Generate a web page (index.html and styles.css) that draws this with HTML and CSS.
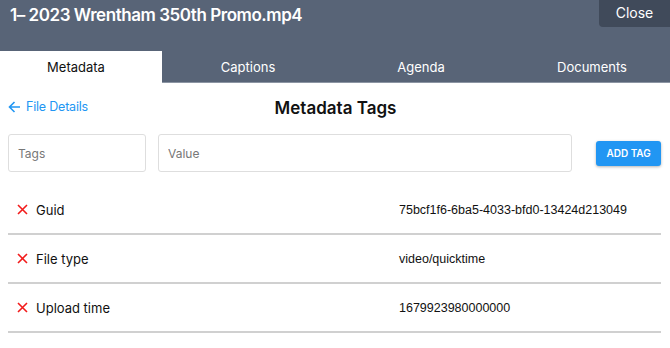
FILE: index.html
```html
<!DOCTYPE html>
<html lang="en">
<head>
    <meta charset="UTF-8">
    <meta name="viewport" content="width=device-width, initial-scale=1.0">
    <title>Metadata Tags</title>
    <link rel="stylesheet" href="styles.css">
</head>
<body>
    <div class="header">
        <div class="title-bar">
            <h1 class="title">1– 2023 Wrentham 350th Promo.mp4</h1>
            <button class="close-button">Close</button>
        </div>
        <div class="tabs">
            <div class="tab active">Metadata</div>
            <div class="tab tab-captions">Captions</div>
            <div class="tab tab-agenda">Agenda</div>
            <div class="tab tab-documents">Documents</div>
        </div>
    </div>

    <div class="content">
        <div class="toolbar">
            <a class="back-link" href="#">
                <svg width="13" height="12" viewBox="0 0 13 12"><path d="M12 6H1.5M6.5 1L1.5 6l5 5" fill="none" stroke="#2196f3" stroke-width="1.6"/></svg>
                File Details
            </a>
            <h2 class="section-title">Metadata Tags</h2>
        </div>

        <div class="tag-form">
            <input class="field field-tag" type="text" placeholder="Tags">
            <input class="field field-value" type="text" placeholder="Value">
            <button class="add-button">ADD TAG</button>
        </div>

        <div class="tag-list">
            <div class="tag-row">
                <div class="tag-name">
                    <svg class="remove" width="11" height="11" viewBox="0 0 11 11"><path d="M1 1l9 9M10 1l-9 9" stroke="#f21b1b" stroke-width="1.6"/></svg>
                    Guid
                </div>
                <div class="tag-value">75bcf1f6-6ba5-4033-bfd0-13424d213049</div>
            </div>
            <div class="tag-row">
                <div class="tag-name">
                    <svg class="remove" width="11" height="11" viewBox="0 0 11 11"><path d="M1 1l9 9M10 1l-9 9" stroke="#f21b1b" stroke-width="1.6"/></svg>
                    File type
                </div>
                <div class="tag-value">video/quicktime</div>
            </div>
            <div class="tag-row">
                <div class="tag-name">
                    <svg class="remove" width="11" height="11" viewBox="0 0 11 11"><path d="M1 1l9 9M10 1l-9 9" stroke="#f21b1b" stroke-width="1.6"/></svg>
                    Upload time
                </div>
                <div class="tag-value">1679923980000000</div>
            </div>
        </div>
    </div>
</body>
</html>
```

FILE: styles.css
```css
body {
    margin: 0;
    font-family: "Inter", "Noto Sans", sans-serif;
    color: #111;
    background: #fff;
}
.header {
    background-color: #586477;
}
.title-bar {
    display: flex;
    justify-content: space-between;
    align-items: flex-start;
    height: 51px;
}
.title {
    margin: 0;
    padding: 5px 0 0 10px;
    font-size: 17px;
    font-weight: 600;
    color: #fff;
    letter-spacing: -0.45px;
}
.close-button {
    width: 71px;
    height: 27px;
    border: none;
    border-bottom-left-radius: 4px;
    background-color: #404a5a;
    color: #fff;
    font-family: inherit;
    font-size: 14px;
    padding: 0 0 2px;
}
.tabs {
    display: flex;
    height: 31px;
    border-bottom: 1px solid #8c95a3;
}
.tab {
    display: flex;
    align-items: center;
    justify-content: center;
    font-size: 13px;
    color: #fff;
}
.tab.active {
    width: 162px;
    padding-right: 10px;
    box-sizing: border-box;
    background-color: #fff;
    color: #111;
    border-bottom: 1px solid #fff;
    margin-bottom: -1px;
}
.tab-captions {
    width: 172px;
}
.tab-agenda {
    width: 174px;
}
.tab-documents {
    flex: 1;
    padding-left: 6px;
}
.content {
    padding: 0 9px 0 8px;
}
.toolbar {
    position: relative;
    display: flex;
    align-items: center;
    justify-content: center;
    height: 49px;
}
.back-link {
    position: absolute;
    left: 0;
    top: 16px;
    display: flex;
    align-items: center;
    gap: 5px;
    color: #2196f3;
    text-decoration: none;
    font-size: 12.5px;
    letter-spacing: -0.2px;
}
.section-title {
    margin: 0 0 0 2px;
    font-size: 17px;
    font-weight: 600;
    color: #111;
}
.tag-form {
    display: flex;
    align-items: center;
    height: 38px;
    margin-top: 2px;
}
.field {
    box-sizing: border-box;
    height: 38px;
    border: 1px solid #dedede;
    border-radius: 3px;
    padding: 0 9px;
    font-family: inherit;
    font-size: 12px;
    color: #333;
}
.field::placeholder {
    color: #777;
}
.field-tag {
    width: 138px;
}
.field-value {
    width: 415px;
    margin-left: 12px;
}
.add-button {
    margin-left: 24px;
    width: 65px;
    height: 25px;
    border: none;
    border-radius: 3px;
    background-color: #2196f3;
    color: #fff;
    font-family: inherit;
    font-size: 10px;
    font-weight: 600;
    box-shadow: 0 1px 3px rgba(0, 0, 0, 0.3);
}
.tag-list {
    margin-top: 14px;
}
.tag-row {
    display: flex;
    align-items: center;
    height: 47px;
    border-bottom: 2px solid #d0d0d0;
}
.tag-name {
    display: flex;
    align-items: center;
    gap: 8px;
    width: 391px;
    padding-left: 9px;
    box-sizing: border-box;
    font-size: 13px;
}
.tag-value {
    font-family: "Liberation Sans", Arial, sans-serif;
    font-size: 12.5px;
}
```
